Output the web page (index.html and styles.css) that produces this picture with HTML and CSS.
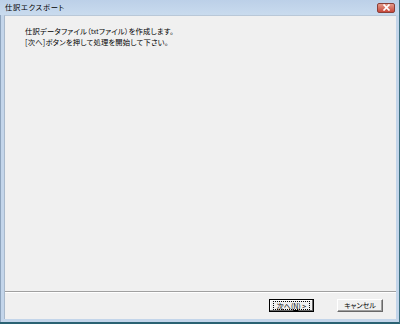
FILE: index.html
```html
<!DOCTYPE html>
<html lang="ja">
<head>
<meta charset="utf-8">
<link rel="stylesheet" href="styles.css">
</head>
<body>
<div class="window">
  <div class="titlebar">
    <span class="title">仕訳エクスポート</span>
    <span class="close"><svg width="9" height="7" viewBox="0 0 9 7"><path d="M1.5 0.5 L7.5 6.5 M7.5 0.5 L1.5 6.5" stroke="#fff" stroke-width="1.7"/></svg></span>
  </div>
  <div class="frame">
    <div class="client">
      <div class="message">
        <p>仕訳データファイル（<span class="small">txt</span>ファイル）を作成します。</p>
        <p>[次へ]ボタンを押して処理を開始して下さい。</p>
      </div>
      <div class="separator"></div>
      <div class="footer">
        <button class="btn default"><span class="focus">次へ(<u>N</u>) &gt;</span></button>
        <button class="btn">キャンセル</button>
      </div>
    </div>
  </div>
</div>
</body>
</html>
```
FILE: styles.css
```css
* { box-sizing: border-box; }
html, body { margin: 0; padding: 0; }
body {
  width: 400px;
  height: 324px;
  font-family: "Noto Sans CJK JP", "Noto Sans", sans-serif;
  color: #000;
  background: #f0f0f0;
}
.window {
  width: 400px;
  height: 324px;
  display: flex;
  flex-direction: column;
  background: #c3d5ea;
  border-right: 1px solid #3c6f80;
  border-bottom: 2px solid #2a6273;
}
.titlebar {
  height: 15px;
  display: flex;
  align-items: center;
  justify-content: space-between;
  padding: 0 4px 0 5px;
  background: linear-gradient(#bcd0e8, #c9dbee);
}
.title {
  font-size: 7.3px;
  line-height: 1;
  color: #000;
  font-feature-settings: "palt";
  letter-spacing: 0.7px;
}
.close {
  width: 18px;
  height: 10px;
  display: flex;
  align-items: center;
  justify-content: center;
  background: linear-gradient(#e39a8a, #c7473a);
  border: 1px solid #8a3f38;
  border-radius: 2px;
}
.close svg { display: block; }
.frame {
  flex: 1;
  display: flex;
  padding: 0 3px 3px 3px;
  background: #c3d5ea;
  border-left: 1px solid #8ea4bd;
}
.client {
  flex: 1;
  display: flex;
  flex-direction: column;
  background: #f0f0f0;
  border-left: 1px solid #a9b9cb;
  border-top: 1px solid #b9c8d8;
}
.message {
  flex: 1;
  padding: 10px 0 0 20px;
}
.message p {
  margin: 0;
  line-height: 11px;
  font-size: 7.3px;
  font-feature-settings: "palt";
  letter-spacing: 0.2px;
}
.small { font-size: 6px; }
.separator {
  height: 2px;
  margin: 0;
  border-top: 1px solid #a0a0a0;
  border-bottom: 1px solid #fff;
}
.footer {
  height: 26px;
  display: flex;
  justify-content: flex-end;
  align-items: flex-start;
  gap: 23px;
  padding: 6px 13px 0 0;
}
.btn {
  width: 46px;
  height: 13px;
  padding: 0;
  display: flex;
  align-items: center;
  justify-content: center;
  font-family: "Noto Sans CJK JP", "Noto Sans", sans-serif;
  font-size: 7px;
  line-height: 9px;
  color: #000;
  background: #f0f0f0;
  border: 1px solid;
  border-color: #fff #696969 #696969 #fff;
  box-shadow: inset -1px -1px 0 #a0a0a0;
  font-feature-settings: "palt";
}
.btn.default {
  width: 45px;
  border: 1px solid #000;
  box-shadow: inset -1px -1px 0 #696969, inset 1px 1px 0 #fff;
}
.focus {
  display: block;
  width: 37px;
  height: 9px;
  line-height: 8px;
  border: 1px dotted #000;
}
u { text-decoration: underline; }
```
